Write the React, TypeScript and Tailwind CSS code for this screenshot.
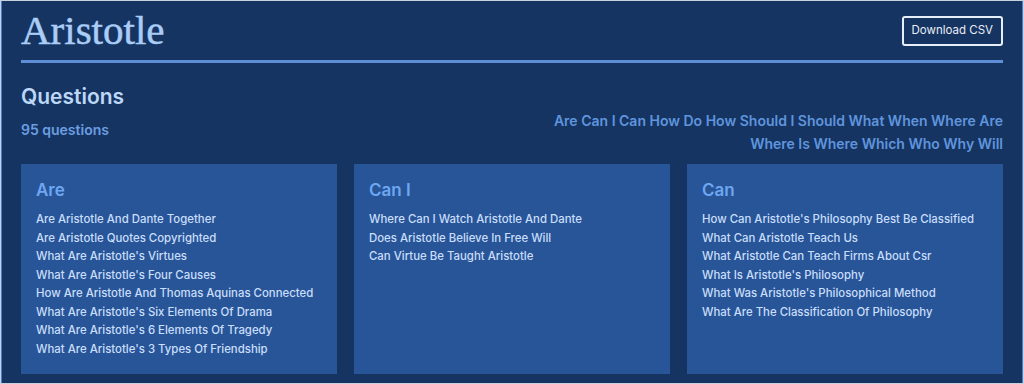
import React from 'react'

const groups: { title: string; items: string[] }[] = [
  {
    title: 'Are',
    items: [
      'Are Aristotle And Dante Together',
      'Are Aristotle Quotes Copyrighted',
      "What Are Aristotle's Virtues",
      "What Are Aristotle's Four Causes",
      'How Are Aristotle And Thomas Aquinas Connected',
      "What Are Aristotle's Six Elements Of Drama",
      "What Are Aristotle's 6 Elements Of Tragedy",
      "What Are Aristotle's 3 Types Of Friendship",
    ],
  },
  {
    title: 'Can I',
    items: [
      'Where Can I Watch Aristotle And Dante',
      'Does Aristotle Believe In Free Will',
      'Can Virtue Be Taught Aristotle',
    ],
  },
  {
    title: 'Can',
    items: [
      "How Can Aristotle's Philosophy Best Be Classified",
      'What Can Aristotle Teach Us',
      'What Aristotle Can Teach Firms About Csr',
      "What Is Aristotle's Philosophy",
      "What Was Aristotle's Philosophical Method",
      'What Are The Classification Of Philosophy',
    ],
  },
]

const nav = [
  'Are', 'Can I', 'Can', 'How Do', 'How Should I', 'Should', 'What', 'When', 'Where Are',
  'Where Is', 'Where', 'Which', 'Who', 'Why', 'Will',
]

export default function App() {
  return (
    <div className="h-[384px] w-[1024px] overflow-hidden border border-[#c9d1de] bg-[#163461] font-['Inter',sans-serif]">
      <div className="h-full border-x border-[#4f7fc9] px-[19px] pt-[9px]">
        {/* Header */}
        <div className="flex items-center justify-between border-b-[3px] border-[#5d8fd9] pb-[10px]">
          <h1 className="font-['Liberation_Serif',serif] text-[41px] leading-[40px] text-[#a9cdf6] [-webkit-text-stroke:0.5px_#a9cdf6]">
            Aristotle
          </h1>
          <button className="mt-[2px] rounded-[3px] border-2 border-[#e6eef9] px-[8px] py-[4px] text-[11.5px] text-[#e8eef8]">
            Download CSV
          </button>
        </div>

        {/* Summary */}
        <div className="mt-[20px] flex justify-between">
          <div>
            <h2 className="text-[21px] font-semibold leading-[28px] text-[#bcd7f7]">Questions</h2>
            <p className="mt-[8px] text-[14px] font-semibold text-[#6b9ee2]">95 questions</p>
          </div>
          <div className="mt-[26px] w-[460px] text-right text-[14px] font-semibold leading-[23px] text-[#5f94de]">
            {nav.join(' ')}
          </div>
        </div>

        {/* Groups */}
        <div className="mt-[9px] grid grid-cols-3 gap-[17px]">
          {groups.map((g) => (
            <div key={g.title} className="h-[210px] bg-[#285598] px-[15px] pt-[14px]">
              <h3 className="text-[17px] font-semibold leading-[24px] text-[#6ea7f1]">{g.title}</h3>
              <ul className="mt-[8px]">
                {g.items.map((q) => (
                  <li key={q} className="whitespace-nowrap text-[11.4px] font-medium leading-[18.57px] text-[#c8defa]">
                    {q}
                  </li>
                ))}
              </ul>
            </div>
          ))}
        </div>
      </div>
    </div>
  )
}
